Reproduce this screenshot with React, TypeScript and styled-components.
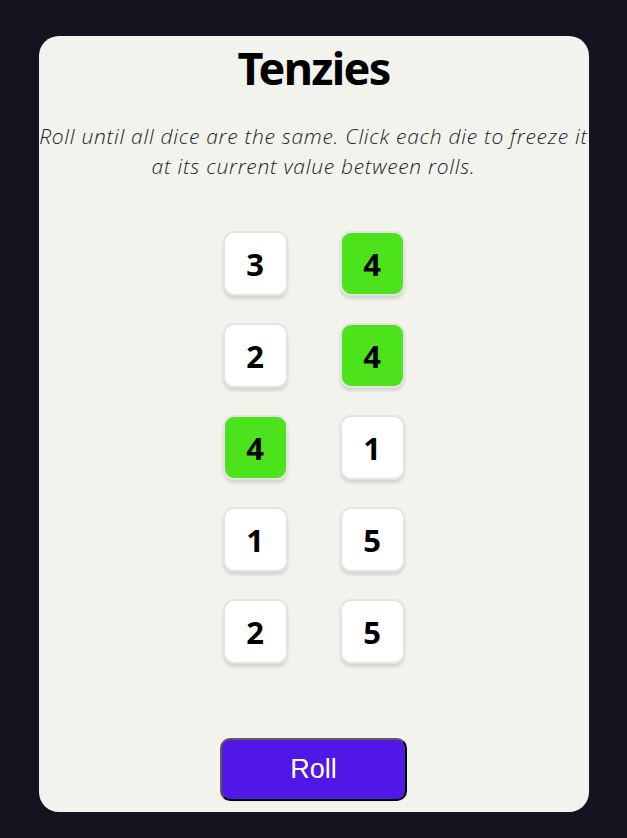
import React, { useState } from "react";
import styled, { createGlobalStyle } from "styled-components";

const GlobalStyle = createGlobalStyle`
  html, body {
    margin: 0;
    padding: 0;
    background: #15131f;
  }
  body {
    font-family: "Noto Sans", "Open Sans", sans-serif;
  }
`;

const Page = styled.div`
  padding: 36px 0 26px;
  display: flex;
  justify-content: center;
`;

const Card = styled.main`
  box-sizing: border-box;
  width: 550px;
  height: 776px;
  background: #f3f3ee;
  border-radius: 20px;
  display: flex;
  flex-direction: column;
  align-items: center;
  padding: 0 0 11px;
`;

const Title = styled.h1`
  margin: 0;
  font-family: "Noto Sans", sans-serif;
  font-weight: 700;
  font-size: 45px;
  line-height: 63px;
  color: #000;
  letter-spacing: -1.7px;
`;

const Instructions = styled.p`
  margin: 22px 0 0;
  font-family: "Open Sans", "Noto Sans", sans-serif;
  font-style: italic;
  font-weight: 300;
  font-size: 21px;
  line-height: 30px;
  letter-spacing: 0.72px;
  color: #1e1e1e;
  text-align: center;
`;

const DiceGrid = styled.div`
  margin-top: 50px;
  display: grid;
  grid-template-columns: repeat(2, 65px);
  column-gap: 52px;
  row-gap: 27px;
`;

const Die = styled.button<{ $held: boolean }>`
  box-sizing: border-box;
  width: 65px;
  height: 65px;
  padding: 0;
  border: 2px solid #e4e4e4;
  border-radius: 11px;
  background: ${(p) => (p.$held ? "#4de31c" : "#ffffff")};
  box-shadow: 0 3px 3px rgba(0, 0, 0, 0.12);
  font-family: "Noto Sans", sans-serif;
  font-weight: 700;
  font-size: 31px;
  color: #000;
  cursor: pointer;
  display: flex;
  align-items: center;
  justify-content: center;
`;

const RollButton = styled.button`
  box-sizing: border-box;
  margin-top: auto;
  width: 187px;
  height: 63px;
  background: #5117e7;
  color: #fff;
  border: 2px solid;
  border-color: #5a5a5a #000 #000 #5a5a5a;
  border-radius: 10px;
  font-family: "Liberation Sans", Arial, sans-serif;
  font-size: 27px;
  cursor: pointer;
`;

type DieData = { id: number; value: number; held: boolean };

const initialDice: DieData[] = [
  { id: 1, value: 3, held: false },
  { id: 2, value: 4, held: true },
  { id: 3, value: 2, held: false },
  { id: 4, value: 4, held: true },
  { id: 5, value: 4, held: true },
  { id: 6, value: 1, held: false },
  { id: 7, value: 1, held: false },
  { id: 8, value: 5, held: false },
  { id: 9, value: 2, held: false },
  { id: 10, value: 5, held: false },
];

export default function App() {
  const [dice, setDice] = useState<DieData[]>(initialDice);

  const toggle = (id: number) =>
    setDice((d) => d.map((x) => (x.id === id ? { ...x, held: !x.held } : x)));

  const roll = () =>
    setDice((d) =>
      d.map((x) => (x.held ? x : { ...x, value: Math.ceil(Math.random() * 6) }))
    );

  return (
    <>
      <GlobalStyle />
      <Page>
        <Card>
          <Title>Tenzies</Title>
          <Instructions>
            Roll until all dice are the same. Click each die to freeze it at its current value
            between rolls.
          </Instructions>
          <DiceGrid>
            {dice.map((d) => (
              <Die key={d.id} $held={d.held} onClick={() => toggle(d.id)}>
                {d.value}
              </Die>
            ))}
          </DiceGrid>
          <RollButton onClick={roll}>Roll</RollButton>
        </Card>
      </Page>
    </>
  );
}
